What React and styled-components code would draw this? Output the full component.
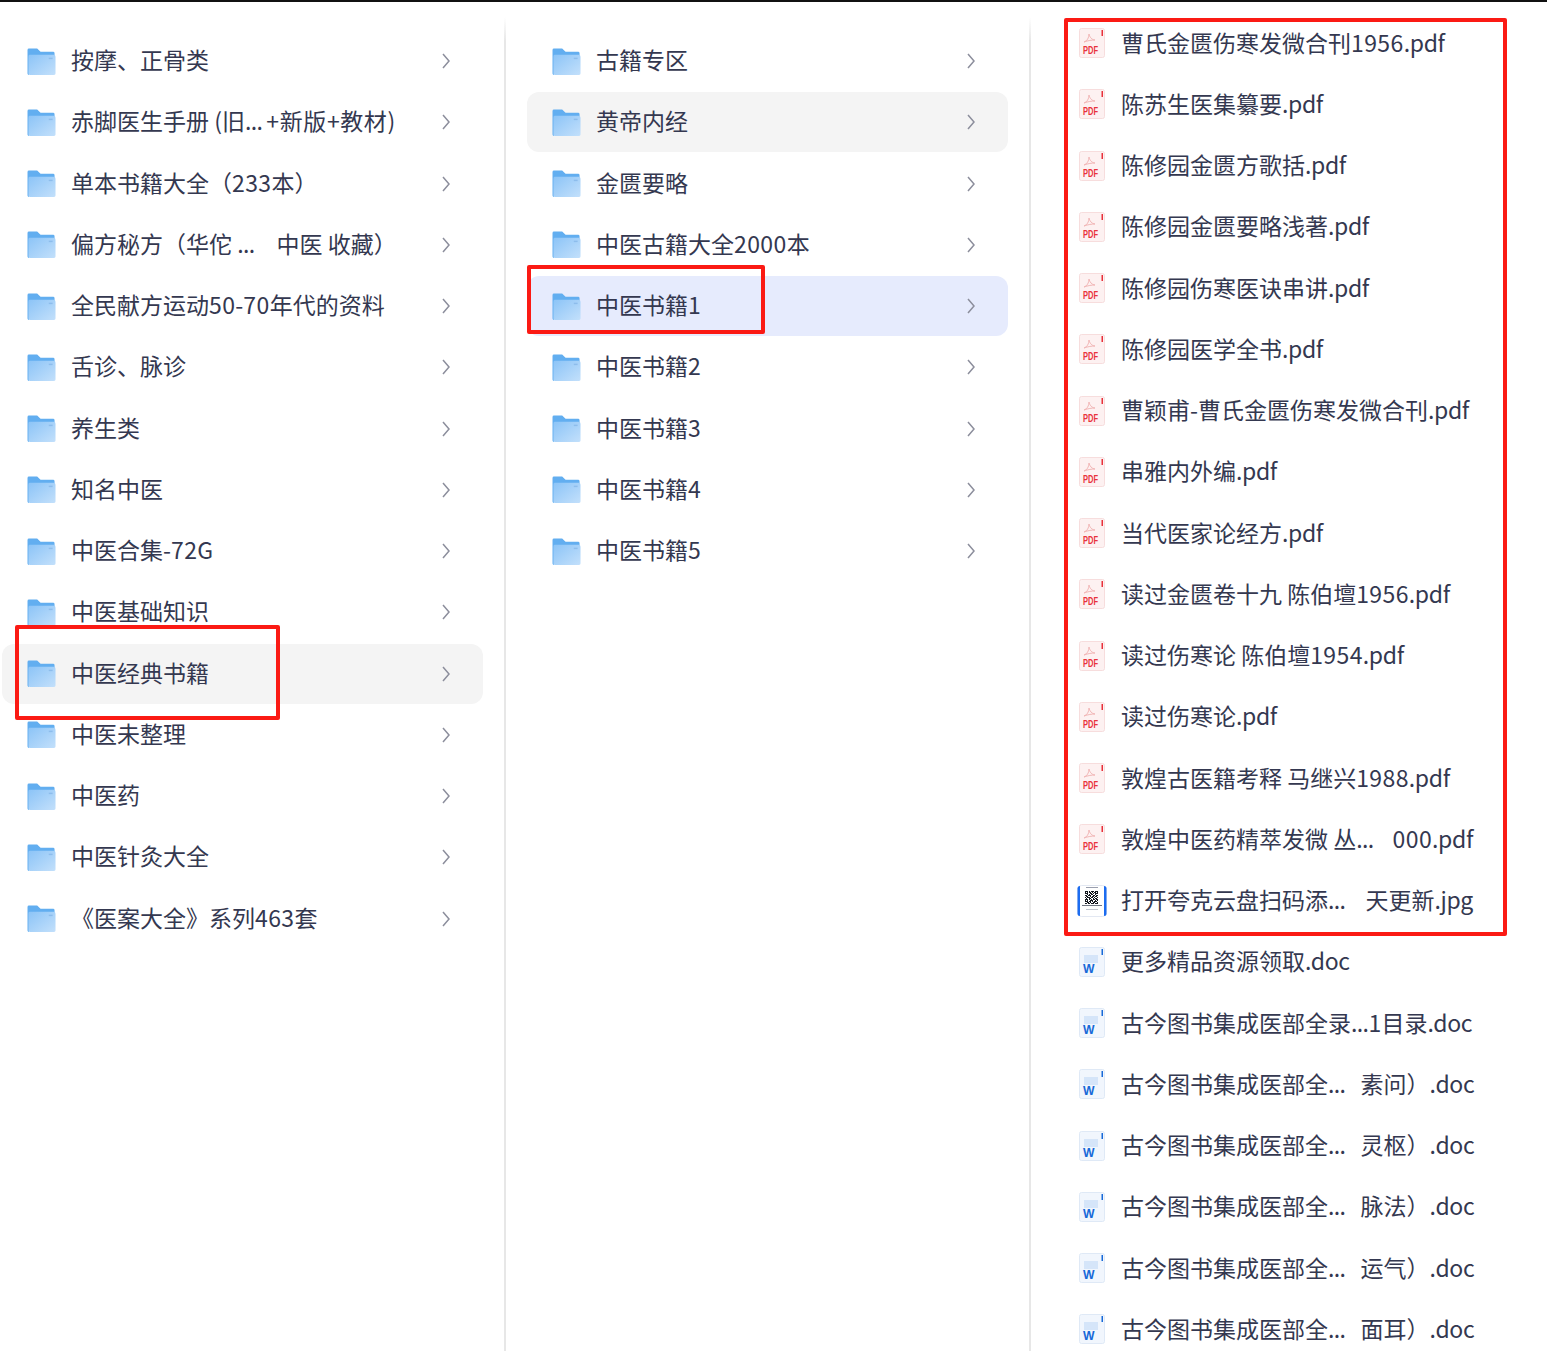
import React from "react";
import styled, { createGlobalStyle } from "styled-components";

const Global = createGlobalStyle`
  html, body { margin: 0; padding: 0; background: #fff; }
  body { font-family: "Noto Sans CJK SC", "Noto Sans", sans-serif; }
`;

const Page = styled.div`
  position: relative;
  height: 1349px;
  border-top: 2px solid #111;
  overflow: hidden;
  display: grid;
  grid-template-columns: 506px 525px 1fr;
  background: #fff;
`;

const Column = styled.div`
  position: relative;
  display: grid;
  grid-auto-rows: 60px;
  row-gap: 1.25px;
  align-content: start;
  padding: ${(p) => p.$top}px ${(p) => p.$right}px 0 ${(p) => p.$left}px;
  border-right: ${(p) => (p.$last ? "none" : "2px solid transparent")};
  border-image: ${(p) =>
    p.$last ? "none" : "linear-gradient(to bottom, #fff 16px, #e7e7e7 40px) 1"};
`;

const Row = styled.div`
  display: flex;
  align-items: center;
  height: 60px;
  padding: 0 ${(p) => (p.$file ? 0 : 32)}px 0 ${(p) => (p.$file ? 13 : 25)}px;
  border-radius: 12px;
  background: ${(p) =>
    p.$state === "active" ? "#e6ebfd" : p.$state === "hover" ? "#f4f4f4" : "transparent"};
`;

const IconSlot = styled.span`
  flex: none;
  display: flex;
  align-items: center;
  width: ${(p) => (p.$file ? 42 : 44)}px;
  margin-top: ${(p) => (p.$file ? 0 : 1)}px;
`;

const Name = styled.span`
  flex: 1;
  min-width: 0;
  display: flex;
  font-size: 23px;
  line-height: 32px;
  padding-bottom: ${(p) => (p.$file ? 3 : 4)}px;
  color: #343850;
  white-space: pre;
`;

const Tail = styled.span`
  margin-left: ${(p) => p.$gap}px;
  letter-spacing: ${(p) => p.$track || 0}px;
`;

const Digits = styled.span`
  letter-spacing: 0.4px;
`;

const Dots = styled.span`
  letter-spacing: -0.6px;
`;

const Ext = styled.span`
  letter-spacing: -0.35px;
`;

const Chevron = styled.svg`
  flex: none;
  width: 10px;
  height: 18px;
`;

const Mark = styled.div`
  position: absolute;
  border: 4px solid #fb1a14;
  border-radius: 2px;
  box-sizing: border-box;
  left: ${(p) => p.$x}px;
  top: ${(p) => p.$y}px;
  width: ${(p) => p.$w}px;
  height: ${(p) => p.$h}px;
  pointer-events: none;
`;

const QrBox = styled.svg`
  margin-left: -2px;
`;

const Rich = ({ text }) =>
  text.split(/(\d+|\.\.\.|\.[a-z]+$)/).map((part, i) => {
    if (/^\d+$/.test(part)) return <Digits key={i}>{part}</Digits>;
    if (part === "...") return <Dots key={i}>{part}</Dots>;
    if (/^\.[a-z]+$/.test(part)) return <Ext key={i}>{part}</Ext>;
    return part;
  });

const Folder = () => (
  <svg width="30" height="28" viewBox="0 0 30 29">
    <defs>
      <linearGradient id="fg" x1="0" y1="0" x2="1" y2="1">
        <stop offset="0" stopColor="#8cc4f7" />
        <stop offset="1" stopColor="#c3e0fb" />
      </linearGradient>
    </defs>
    <path d="M0 2a1.5 1.5 0 0 1 1.5-1.5h8.5l3.5 3.5h13A1.5 1.5 0 0 1 28 5.500V9H1.500V28H1.500A1.500 1.500 0 0 1 0 26.500z" fill="#62aef0" />
    <path d="M1 8.500A1.500 1.500 0 0 1 2.500 7H27a2 2 0 0 1 2 2v17.500a1.500 1.500 0 0 1-1.500 1.500H2.500A1.500 1.500 0 0 1 1 26.500z" fill="url(#fg)" />
    <rect x="22" y="10" width="4" height="1.500" fill="#8dbdec" />
  </svg>
);

const Sheet = ({ accent, bg, border, children }) => (
  <svg width="26" height="30" viewBox="0 0 26 30">
    <rect x="0.500" y="0.500" width="25" height="29" rx="2" fill={bg} stroke={border} />
    <rect x="22.500" y="2" width="1.500" height="6" fill={accent} />
    {children}
  </svg>
);

const PdfIcon = () => (
  <Sheet accent="#e8303a" bg="#fdf1f1" border="#f7dddd">
    <path d="M5 14c3-1 5-4 5-8 .5 3 3 6 6 6-3 0-7 .5-11 2z" fill="none" stroke="#f2b7b7" strokeWidth="1" />
    <text x="4" y="26" textLength="15" lengthAdjust="spacingAndGlyphs" fontFamily="'Liberation Sans', sans-serif" fontWeight="700" fontSize="10.500" fill="#e9323c">PDF</text>
  </Sheet>
);

const WordIcon = () => (
  <Sheet accent="#1769d8" bg="#f1f6fd" border="#dfe9f6">
    <rect x="5" y="8" width="14" height="8" fill="#d5e5f9" />
    <text x="4" y="25.500" textLength="11.500" lengthAdjust="spacingAndGlyphs" fontFamily="'Liberation Sans', sans-serif" fontWeight="700" fontSize="13.500" fill="#1769d8">W</text>
  </Sheet>
);

const qrCells = [
  "1110101110111",
  "1010110101101",
  "1110011010111",
  "0010101100100",
  "1101110011011",
  "0110010110110",
  "1011101101001",
  "0100110010110",
  "1110101011011",
  "1010011100101",
  "1110110101110",
  "0011010011001",
  "1101101110111",
];

const QrIcon = () => (
  <QrBox width="30" height="32" viewBox="0 0 30 32">
    <rect x="0.500" y="0.500" width="29" height="31" rx="4" fill="#fff" stroke="#e3e8f2" />
    <path d="M3 1a2.500 2.500 0 0 0-2.500 2.500v25A2.500 2.500 0 0 0 3 31z" fill="#1c6cf0" />
    <path d="M27 1a2.500 2.500 0 0 1 2.500 2.500v25A2.500 2.500 0 0 1 27 31z" fill="#1c6cf0" />
    <rect x="9" y="2" width="12" height="1" fill="#9a9fae" />
    {qrCells.map((line, y) =>
      line.split("").map((c, x) =>
        c === "1" ? <rect key={`${x}-${y}`} x={8 + x} y={6 + y} width="1" height="1" fill="#15181f" /> : null
      )
    )}
    <rect x="5" y="20" width="20" height="1" fill="#6f7582" />
    <rect x="9" y="24" width="12" height="1" fill="#c2c6cf" />
  </QrBox>
);

const col1 = [
  ["按摩、正骨类"],
  ["赤脚医生手册 (旧...", "+新版+教材)", 4, null, 0.6],
  ["单本书籍大全（233本）"],
  ["偏方秘方（华佗 ...", "中医 收藏）", 22],
  ["全民献方运动50-70年代的资料"],
  ["舌诊、脉诊"],
  ["养生类"],
  ["知名中医"],
  ["中医合集-72G"],
  ["中医基础知识"],
  ["中医经典书籍", null, 0, "hover"],
  ["中医未整理"],
  ["中医药"],
  ["中医针灸大全"],
  ["《医案大全》系列463套"],
];

const col2 = [
  ["古籍专区"],
  ["黄帝内经", null, 0, "hover"],
  ["金匮要略"],
  ["中医古籍大全2000本"],
  ["中医书籍1", null, 0, "active"],
  ["中医书籍2"],
  ["中医书籍3"],
  ["中医书籍4"],
  ["中医书籍5"],
];

const col3 = [
  ["pdf", "曹氏金匮伤寒发微合刊1956.pdf"],
  ["pdf", "陈苏生医集纂要.pdf"],
  ["pdf", "陈修园金匮方歌括.pdf"],
  ["pdf", "陈修园金匮要略浅著.pdf"],
  ["pdf", "陈修园伤寒医诀串讲.pdf"],
  ["pdf", "陈修园医学全书.pdf"],
  ["pdf", "曹颖甫-曹氏金匮伤寒发微合刊.pdf"],
  ["pdf", "串雅内外编.pdf"],
  ["pdf", "当代医家论经方.pdf"],
  ["pdf", "读过金匮卷十九 陈伯壇1956.pdf"],
  ["pdf", "读过伤寒论 陈伯壇1954.pdf"],
  ["pdf", "读过伤寒论.pdf"],
  ["pdf", "敦煌古医籍考释 马继兴1988.pdf"],
  ["pdf", "敦煌中医药精萃发微 丛...", "000.pdf", 19],
  ["qr", "打开夸克云盘扫码添...", "天更新.jpg", 20],
  ["doc", "更多精品资源领取.doc"],
  ["doc", "古今图书集成医部全录...1目录.doc"],
  ["doc", "古今图书集成医部全...", "素问）.doc", 15],
  ["doc", "古今图书集成医部全...", "灵枢）.doc", 15],
  ["doc", "古今图书集成医部全...", "脉法）.doc", 15],
  ["doc", "古今图书集成医部全...", "运气）.doc", 15],
  ["doc", "古今图书集成医部全...", "面耳）.doc", 15],
];

const fileIcons = { pdf: PdfIcon, doc: WordIcon, qr: QrIcon };

const FolderRow = ({ name, tail, gap, state, track }) => (
  <Row $state={state}>
    <IconSlot><Folder /></IconSlot>
    <Name>
      <Rich text={name} />
      {tail && <Tail $gap={gap} $track={track}><Rich text={tail} /></Tail>}
    </Name>
    <Chevron viewBox="0 0 10 18">
      <path d="M2 2l6 7-6 7" fill="none" stroke="#8c8e9c" strokeWidth="1.500" />
    </Chevron>
  </Row>
);

export default function App() {
  return (
    <>
      <Global />
      <Page>
        <Column $top={29} $left={2} $right={21}>
          {col1.map(([n, t, g, s, k]) => (
            <FolderRow key={n} name={n} tail={t} gap={g} state={s} track={k} />
          ))}
        </Column>
        <Column $top={29} $left={21} $right={21}>
          {col2.map(([n, t, g, s]) => (
            <FolderRow key={n} name={n} tail={t} gap={g} state={s} />
          ))}
        </Column>
        <Column $top={11} $left={35} $right={0} $last>
          {col3.map(([kind, n, t, g]) => {
            const Icon = fileIcons[kind];
            return (
              <Row key={n + (t || "")} $file>
                <IconSlot $file><Icon /></IconSlot>
                <Name $file>
                  <Rich text={n} />
                  {t && <Tail $gap={g}><Rich text={t} /></Tail>}
                </Name>
              </Row>
            );
          })}
        </Column>
        <Mark $x={15} $y={623} $w={265} $h={95} />
        <Mark $x={527} $y={263} $w={238} $h={69} />
        <Mark $x={1064} $y={16} $w={443} $h={918} />
      </Page>
    </>
  );
}
